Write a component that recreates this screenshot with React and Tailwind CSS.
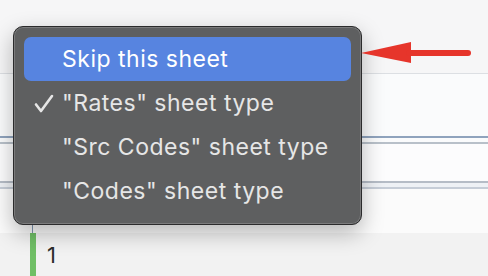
const items = [
  { label: "Skip this sheet", active: true },
  { label: '"Rates" sheet type', checked: true },
  { label: '"Src Codes" sheet type' },
  { label: '"Codes" sheet type' },
];

const App = () => {
  return (
    <div className="relative w-[488px] h-[276px] overflow-hidden bg-[#f6f6f7] font-['Inter',sans-serif]">
      {/* sheet behind the menu */}
      <div className="flex flex-col h-full">
        <div className="h-[73px] bg-[#f6f6f7]"></div>
        <div className="h-px bg-[#dcdfe3]"></div>
        <div className="h-[62px] bg-[#fafbfc]"></div>
        <div className="h-[2px] bg-[#8fa3bd]"></div>
        <div className="h-[4px] bg-[#fafbfc]"></div>
        <div className="h-[2px] bg-[#b8c0c9]"></div>
        <div className="h-[37px] bg-[#fcfcfd]"></div>
        <div className="h-[2px] bg-[#b5bcc6]"></div>
        <div className="h-[4px] bg-[#eef1f5]"></div>
        <div className="h-[2px] bg-[#c6cdd7]"></div>
        <div className="h-[44px] bg-[#fbfbfb] flex pl-[32px]">
          <div className="w-px h-full bg-[#8196b0]"></div>
        </div>
        <div className="flex-1 bg-[#f2f2f2] flex items-stretch pl-[30px]">
          <div className="w-[6px] bg-[#70bf66]"></div>
          <span className="ml-[11px] mt-[8px] text-[22px] leading-[28px] text-[#2b2b2b]">1</span>
        </div>
      </div>

      {/* context menu */}
      <div className="absolute left-[13px] top-[26px] w-[349px] h-[199px] rounded-[10px] border border-[#2b2b2c] bg-[#5e5f60] p-[10px] shadow-[0_8px_22px_rgba(0,0,0,0.28),inset_0_0_0_1px_rgba(255,255,255,0.18)]">
        {items.map((item) => (
          <div
            key={item.label}
            className={`relative h-[44px] flex items-center pl-[38px] rounded-[7px] text-[23px] tracking-[0.5px] ${
              item.active ? "bg-[#5784e0] text-white" : "text-[#e6e6e6]"
            }`}
          >
            {item.checked && (
              <svg
                className="absolute left-[10px] top-[13px]"
                width="20"
                height="19"
                viewBox="0 0 20 19"
                fill="none"
              >
                <path d="M2 10.5 L7 17 L18 2" stroke="#e6e6e6" strokeWidth="2.6" strokeLinecap="round" strokeLinejoin="round" />
              </svg>
            )}
            {item.label}
          </div>
        ))}
      </div>

      {/* annotation arrow */}
      <svg className="absolute left-[361px] top-[42px]" width="112" height="22" viewBox="0 0 112 22">
        <polygon points="0,11 50,0 50,21" fill="#e6352b" />
        <line x1="48" y1="11" x2="107" y2="11" stroke="#e6352b" strokeWidth="6" strokeLinecap="round" />
      </svg>
    </div>
  );
};

export default App;
